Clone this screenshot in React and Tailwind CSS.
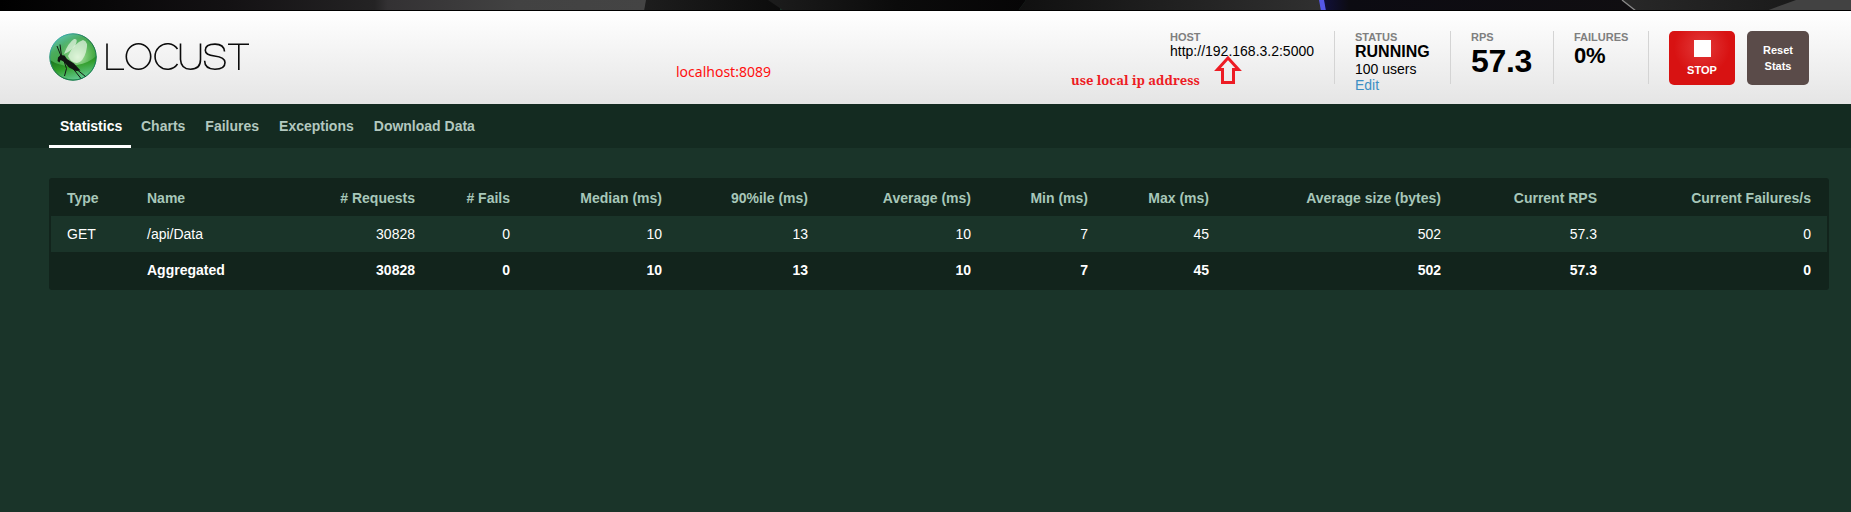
const label = "text-[11px] leading-[12px] font-bold text-[#7f7f7f]";

function TopStrip() {
  return (
    <svg className="block h-[11px] w-full shrink-0" viewBox="0 0 1851 11" preserveAspectRatio="none">
      <defs>
        <linearGradient id="st1" x1="0" x2="1"><stop offset="0" stopColor="#000" /><stop offset="0.35" stopColor="#131113" /><stop offset="0.58" stopColor="#242324" /><stop offset="0.6" stopColor="#333133" /><stop offset="0.8" stopColor="#424242" /><stop offset="1" stopColor="#444" /></linearGradient>
        <linearGradient id="st2" x1="0" x2="1"><stop offset="0" stopColor="#1d1d1d" /><stop offset="1" stopColor="#0c0c0c" /></linearGradient>
        <linearGradient id="st3" x1="0" x2="1"><stop offset="0" stopColor="#1c1c1c" /><stop offset="0.5" stopColor="#0b0b0b" /><stop offset="1" stopColor="#060506" /></linearGradient>
        <linearGradient id="st4" x1="0" x2="1"><stop offset="0" stopColor="#101010" /><stop offset="1" stopColor="#303030" /></linearGradient>
        <linearGradient id="st5" x1="0" x2="1"><stop offset="0" stopColor="#11103a" /><stop offset="0.08" stopColor="#0c0b12" /><stop offset="1" stopColor="#100e11" /></linearGradient>
        <linearGradient id="st6" x1="0" x2="1"><stop offset="0" stopColor="#282828" /><stop offset="1" stopColor="#1a1a1a" /></linearGradient>
      </defs>
      <rect width="646" height="11" fill="url(#st1)" />
      <path d="M646 0H780V11H644Z" fill="url(#st2)" />
      <path d="M768 0H1026L1018 11H784Z" fill="url(#st3)" />
      <path d="M1026 0H1322V11H1018Z" fill="url(#st4)" />
      <path d="M1324 0H1623L1636 11H1324Z" fill="url(#st5)" />
      <path d="M1622 0H1800L1768 11H1635Z" fill="url(#st6)" />
      <path d="M1796 0H1851V11H1766Z" fill="#424242" />
      <path d="M1319 0H1324L1326 11H1321Z" fill="#5558e8" />
      <path d="M1622 0L1636 11" stroke="#8a8a8a" strokeWidth="1.3" />
      <rect y="10" width="1851" height="1" fill="#000" />
    </svg>
  );
}

function Logo() {
  return (
    <svg className="block h-[48px] w-[202px] shrink-0" viewBox="49 33 202 48">
      <defs>
        <linearGradient id="ball" x1="0.15" y1="0.05" x2="0.6" y2="0.9">
          <stop offset="0" stopColor="#5cc4b4" /><stop offset="0.3" stopColor="#4bab5c" /><stop offset="0.7" stopColor="#3fa53c" /><stop offset="1" stopColor="#2f9a3a" />
        </linearGradient>
        <radialGradient id="glow" cx="0.6" cy="0.5" r="0.42">
          <stop offset="0" stopColor="#d2f7c8" stopOpacity="0.85" /><stop offset="1" stopColor="#8fdc88" stopOpacity="0" />
        </radialGradient>
        <linearGradient id="low" x1="0.1" y1="0" x2="0.6" y2="1">
          <stop offset="0" stopColor="#0a5c12" /><stop offset="0.5" stopColor="#2c9a24" /><stop offset="1" stopColor="#6fd4a4" />
        </linearGradient>
        <linearGradient id="rim" x1="0" y1="0" x2="1" y2="1">
          <stop offset="0" stopColor="#4cc6d0" /><stop offset="0.5" stopColor="#1a6b46" /><stop offset="1" stopColor="#1a8a68" />
        </linearGradient>
      </defs>
      <circle cx="73" cy="57" r="23.5" fill="url(#ball)" />
      <circle cx="73" cy="57" r="23.5" fill="url(#glow)" />
      <path d="M50 60Q62 68 77 65Q89 63 96.300 56A23.3 23.3 0 0 1 50 60Z" fill="url(#low)" opacity="0.85" />
      <circle cx="73" cy="57" r="23.200" fill="none" stroke="url(#rim)" strokeWidth="1" />
      <path d="M64 54Q68 43 74 39Q79 38 75 46Q71 51 64 54Z" fill="#f2fbf0" opacity="0.65" />
      <path d="M68 56Q74 43 83 40Q89 41 86 52Q83 62 77 63Q71 63 68 56Z" fill="#f2fbf0" opacity="0.65" />
      <path d="M57.500 61L58 57.500L60.500 55L64.500 55.500L67 59L74 63.500L80.500 70.500L76 71L69 67.500L63.500 61.500L60.500 60L59.500 62.500Z" fill="#111512" />
      <path d="M61.500 56L60 44.500M61 56L57 46M64 61L66.500 68.500L64.500 76M71 66L81 78.500M75 68L85.500 76.500" fill="none" stroke="#111512" strokeWidth="1" />
      <g fill="none" stroke="#0b0b0b" strokeWidth="1.6">
        <path d="M107 43.5V69.2H124" />
        <ellipse cx="138.5" cy="56.5" rx="12.2" ry="12.8" />
        <path d="M177.500 49A12.400 12.800 0 1 0 177.500 64" />
        <path d="M180.500 43.500V59.500Q181 69.200 190.500 69.200Q200.500 69.200 200.500 59.500V43.500" />
        <path d="M224.500 51.500Q224 44.100 215 44.100Q205.300 44.100 205.300 50.200Q205.300 55 214.500 56Q225 57.200 225 62.500Q225 69.200 215 69.200Q204.800 69.200 204.600 60.800" />
        <path d="M228 44.200H249M238.800 44.200V70" />
      </g>
    </svg>
  );
}

const heads = ["Type", "Name", "# Requests", "# Fails", "Median (ms)", "90%ile (ms)", "Average (ms)", "Min (ms)", "Max (ms)", "Average size (bytes)", "Current RPS", "Current Failures/s"];
const values = ["30828", "0", "10", "13", "10", "7", "45", "502", "57.3", "0"];
const cols = "grid grid-cols-[80px_104px_164px_95px_152px_146px_163px_117px_121px_232px_156px_214px] pl-4";

function Row({ cells, className }) {
  return (
    <div className={`${cols} ${className}`}>
      {cells.map((c, i) => (
        <div key={i} className={i < 2 ? "whitespace-nowrap" : "text-right whitespace-nowrap"}>{c}</div>
      ))}
    </div>
  );
}

export default function App() {
  return (
    <div className="relative flex h-[512px] w-[1851px] flex-col overflow-hidden bg-[#1a3429] font-['Liberation_Sans',Arial,sans-serif] text-sm">
      <TopStrip />
      <header className="flex h-[93px] shrink-0 justify-between bg-linear-to-b from-white to-[#e5e5e5] pr-[42px] pl-[49px] text-black">
        <div className="pt-[22px]"><Logo /></div>
        <div className="flex pt-5">
          <div className="h-[53px] w-[165px] border-r border-[#d4d4d4]">
            <div className={label}>HOST</div>
            <div className="leading-4">http://192.168.3.2:5000</div>
          </div>
          <div className="h-[53px] w-[116px] border-r border-[#d4d4d4] pl-5">
            <div className={label}>STATUS</div>
            <div className="pt-px text-base leading-4 font-bold">RUNNING</div>
            <div className="pt-px leading-4">100 users</div>
            <div className="leading-4 text-[#3d8fc4]">Edit</div>
          </div>
          <div className="h-[53px] w-[103px] border-r border-[#d4d4d4] pl-5">
            <div className={label}>RPS</div>
            <div className="text-[32px] leading-9 font-bold tracking-[-0.3px]">57.3</div>
          </div>
          <div className="h-[53px] w-[95px] border-r border-[#d4d4d4] pl-5">
            <div className={label}>FAILURES</div>
            <div className="text-[22px] leading-[26px] font-bold tracking-[-0.3px]">0%</div>
          </div>
          <button className="ml-5 flex h-[54px] w-[66px] flex-col items-center rounded-[5px] bg-[radial-gradient(circle_at_50%_30%,#e23a3a_0,#d81212_28px)] pt-[9px] text-[11px] leading-[13px] font-bold text-white">
            <span className="mb-[7px] block size-[17px] bg-white" />
            STOP
          </button>
          <button className="ml-3 h-[54px] w-[62px] rounded-[5px] bg-[#5a4b49] text-[11px] leading-4 font-bold text-white">
            Reset<br />Stats
          </button>
        </div>
      </header>
      <nav className="flex h-11 shrink-0 bg-[#142b21] pl-[49px] font-bold text-[#b3c8bf]">
        {["Statistics", "Charts", "Failures", "Exceptions", "Download Data"].map((t, i) => (
          <a key={t} className={i === 0 ? "h-11 w-[82px] border-b-3 border-white pt-3 pl-[11px] leading-5 text-white" : "h-11 px-2.5 pt-3 leading-5"}>{t}</a>
        ))}
      </nav>
      <main className="pt-[30px] pl-[49px]">
        <div className="w-[1780px] rounded-[3px] bg-[#12241c] px-0.5 pb-0.5">
          <Row cells={heads} className="h-[38px] pt-0.5 leading-9 font-bold text-[#a7c7b9]" />
          <Row cells={["GET", "/api/Data", ...values]} className="h-9 bg-[#1a3429] leading-9 text-white" />
          <Row cells={["", "Aggregated", ...values]} className="h-9 leading-9 font-bold text-white" />
        </div>
      </main>
      <div className="absolute top-[63px] left-[676px] font-['Noto_Sans',sans-serif] text-sm leading-[18px] text-[#ff1010]">localhost:8089</div>
      <div className="absolute top-[71px] left-[1071px] font-['Noto_Serif','DejaVu_Serif',serif] text-[13px] leading-[18px] font-bold text-[#ed1c24]">use local ip address</div>
      <svg className="absolute top-[55px] left-[1214px] h-[30px] w-[28px]" viewBox="0 0 28 30">
        <path d="M14 3L24.500 14.500H19.500V27.500H8.500V14.500H3.500Z" fill="none" stroke="#ed1c24" strokeWidth="3" />
      </svg>
    </div>
  );
}
